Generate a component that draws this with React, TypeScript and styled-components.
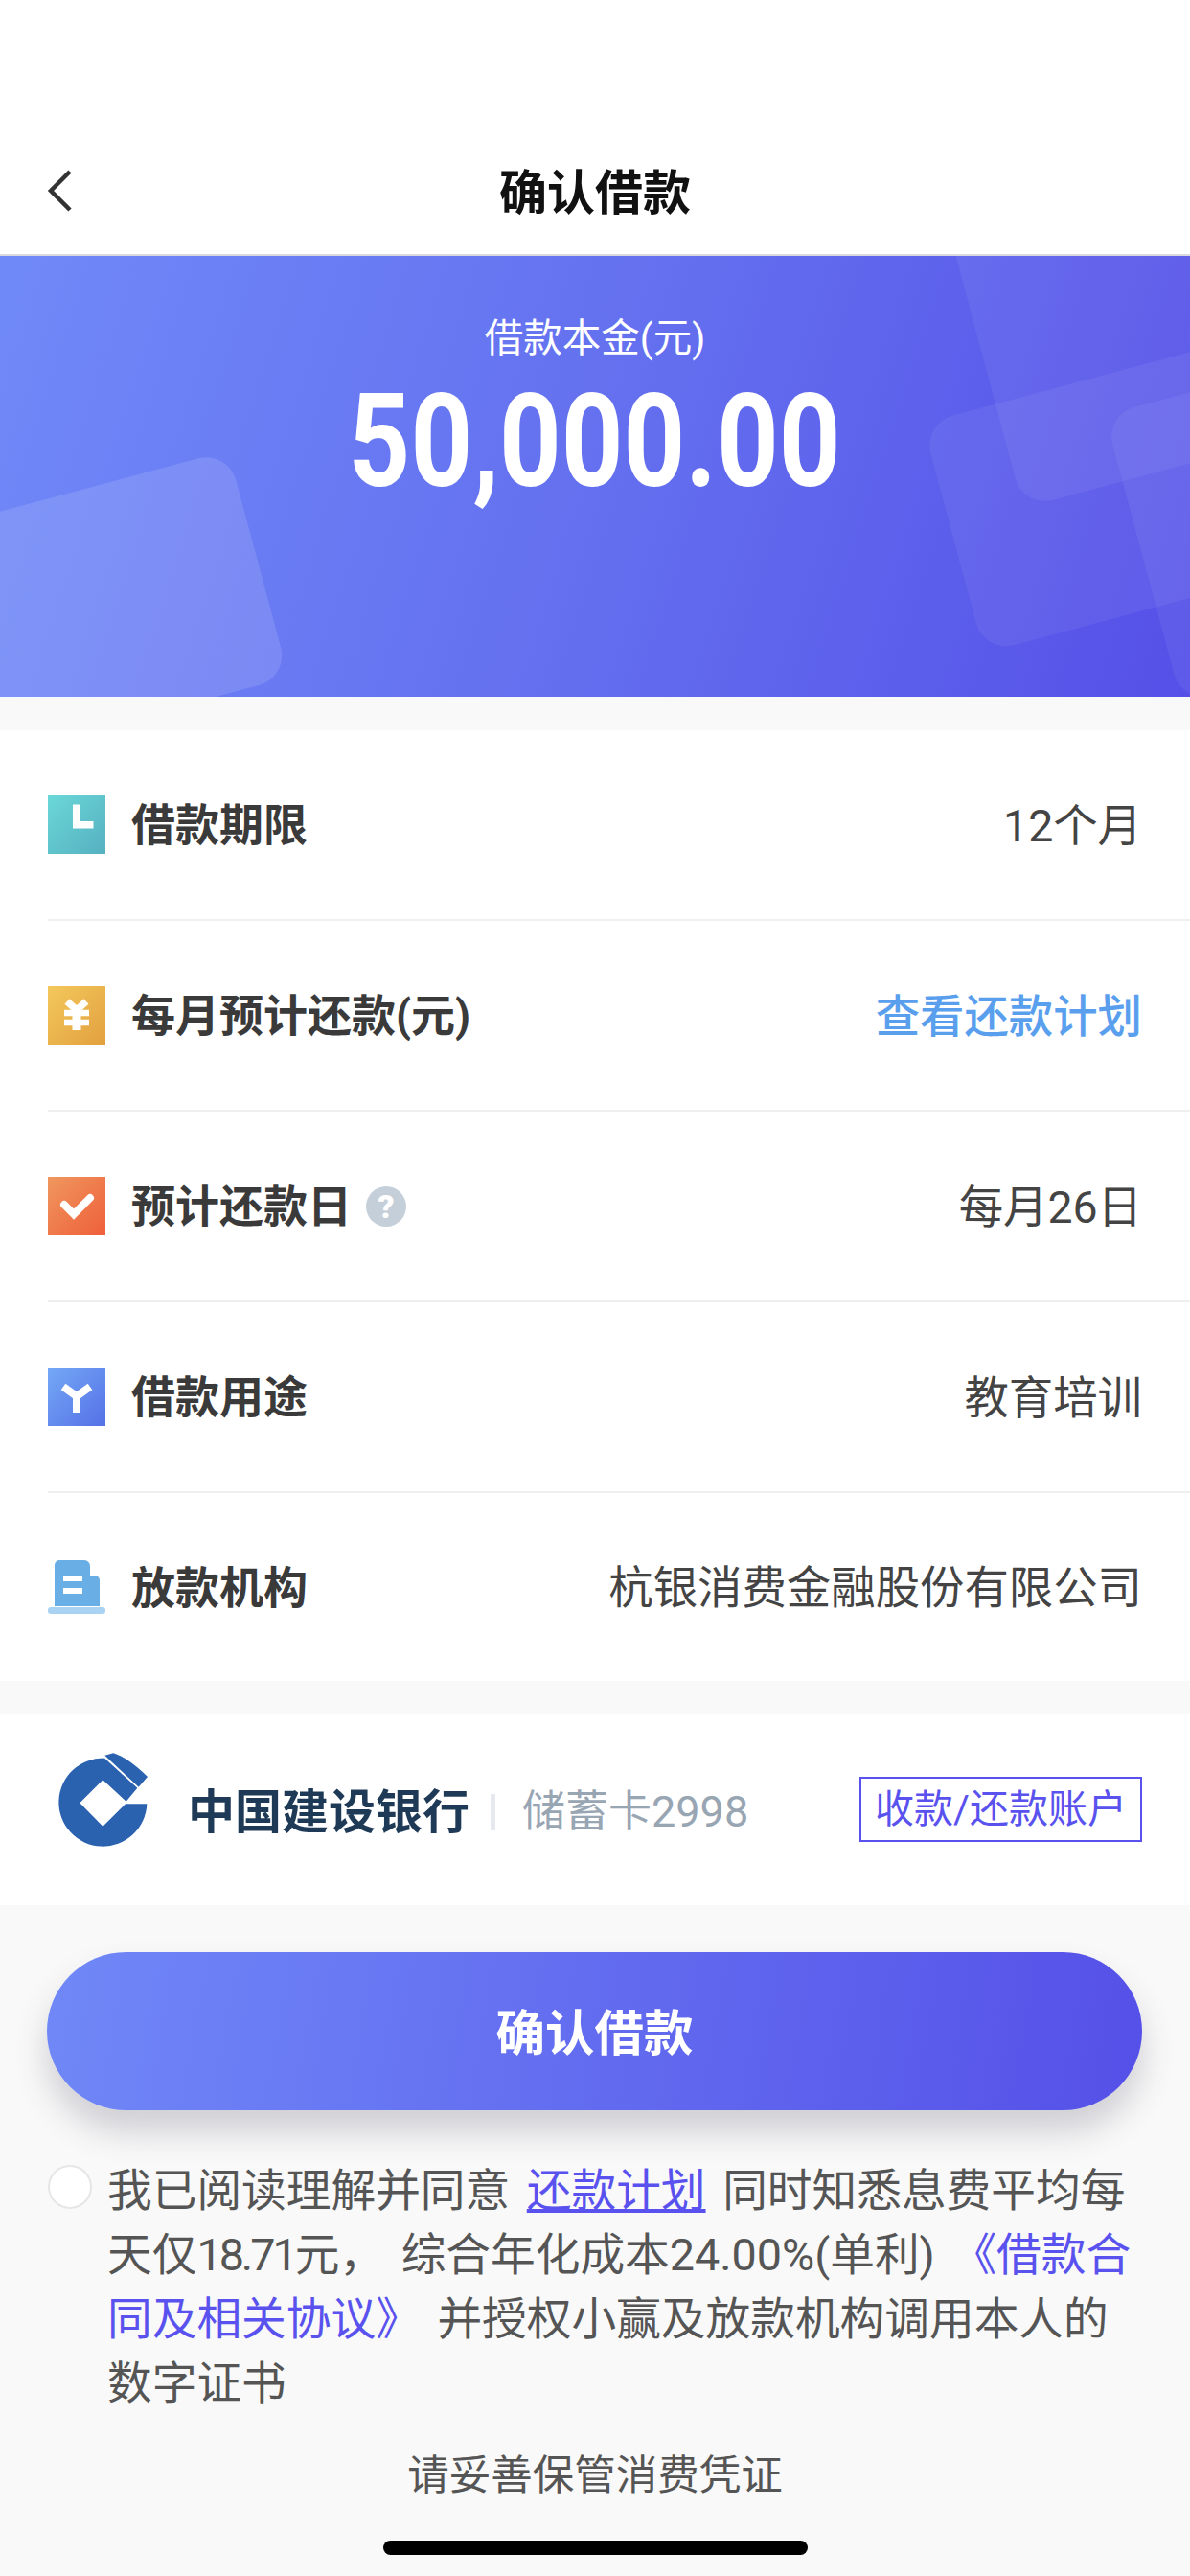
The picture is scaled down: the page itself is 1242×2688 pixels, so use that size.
import styled, { createGlobalStyle } from 'styled-components'

const GlobalStyle = createGlobalStyle`
  * { box-sizing: border-box; }
  html, body { margin: 0; padding: 0; background: #f9f9f9; }
  body { font-family: Roboto, "Noto Sans CJK SC", sans-serif; }
`

function ClockIcon() {
  return (
    <svg width="60" height="61" viewBox="0 0 60 61">
      <defs>
        <linearGradient id="clockBg" x1="0" y1="0" x2="1" y2="1">
          <stop offset="0" stopColor="#6ad8d8" />
          <stop offset="1" stopColor="#56b0c0" />
        </linearGradient>
      </defs>
      <rect width="60" height="61" fill="url(#clockBg)" />
      <path d="M26 9.500h8v17.500h13.500v7.500H26z" fill="#fff" />
    </svg>
  )
}

function YenIcon() {
  return (
    <svg width="60" height="61" viewBox="0 0 60 61">
      <defs>
        <linearGradient id="yenBg" x1="0" y1="0" x2="1" y2="1">
          <stop offset="0" stopColor="#f3c85c" />
          <stop offset="1" stopColor="#e2a03f" />
        </linearGradient>
      </defs>
      <rect width="60" height="61" fill="url(#yenBg)" />
      <path d="M20 16l10 9 10-9" stroke="#fff" strokeWidth="7.500" fill="none" />
      <path d="M17 28h26M17 38h26" stroke="#fff" strokeWidth="6.500" fill="none" />
      <path d="M30 24v22" stroke="#fff" strokeWidth="9" fill="none" />
    </svg>
  )
}

function CheckIcon() {
  return (
    <svg width="60" height="61" viewBox="0 0 60 61">
      <defs>
        <linearGradient id="checkBg" x1="0" y1="0" x2="1" y2="1">
          <stop offset="0" stopColor="#f0975e" />
          <stop offset="1" stopColor="#ee5f3a" />
        </linearGradient>
      </defs>
      <rect width="60" height="61" fill="url(#checkBg)" />
      <path d="M17 29l10 10 17-17" stroke="#fff" strokeWidth="8" fill="none" strokeLinecap="round" />
    </svg>
  )
}

function UsageIcon() {
  return (
    <svg width="60" height="61" viewBox="0 0 60 61">
      <defs>
        <linearGradient id="usageBg" x1="0" y1="0" x2="1" y2="1">
          <stop offset="0" stopColor="#74a9f6" />
          <stop offset="1" stopColor="#5570e6" />
        </linearGradient>
      </defs>
      <rect width="60" height="61" fill="url(#usageBg)" />
      <path d="M16 20l14 10 14-10M30 30v17" stroke="#fff" strokeWidth="8" fill="none" />
    </svg>
  )
}

function BuildingIcon() {
  return (
    <svg width="60" height="56" viewBox="0 0 60 56">
      <path d="M7 5a5 5 0 0 1 5-5h26a6 6 0 0 1 6 6v10h5a5 5 0 0 1 5 5v27H7z" fill="#6aaee6" />
      <rect y="49" width="60" height="7" rx="3" fill="#a9d2f3" />
      <path d="M16 16h20v6H16zM16 29h20v6H16z" fill="#fff" />
    </svg>
  )
}

function BankLogo() {
  return (
    <svg width="120" height="120" viewBox="0 0 360 360">
      <path
        d="M310 190A138 138 0 1 1 178 47L280 140L245 182L172 115L100 187L172 260L243 190Z"
        fill="#2a62b0"
      />
      <path d="M178 38L205 31Q250 45 312 105L284 137Z" fill="#2a62b0" />
    </svg>
  )
}

const rows = [
  { icon: <ClockIcon />, label: '借款期限', value: '12个月' },
  { icon: <YenIcon />, label: '每月预计还款(元)', value: '查看还款计划', link: true },
  { icon: <CheckIcon />, label: '预计还款日', value: '每月26日', help: true },
  { icon: <UsageIcon />, label: '借款用途', value: '教育培训' },
  { icon: <BuildingIcon />, label: '放款机构', value: '杭银消费金融股份有限公司' },
]

function App() {
  return (
    <Page>
      <GlobalStyle />
      <Header>
        <BackButton>
          <svg width="30" height="46" viewBox="0 0 30 46">
            <path d="M24 3L4 23l20 20" stroke="#333" strokeWidth="4.500" fill="none" />
          </svg>
        </BackButton>
        <Title>确认借款</Title>
      </Header>

      <Banner>
        <BannerArt width="1242" height="460" viewBox="0 0 1242 460">
          <g fill="#fff">
            <rect x="-300" y="0" width="300" height="245" rx="32" opacity="0.12" transform="translate(238 203) rotate(-15)" />
            <rect x="0" y="-400" width="400" height="400" rx="32" opacity="0.06" transform="translate(1068 263) rotate(-15)" />
            <rect x="0" y="0" width="400" height="248" rx="32" opacity="0.06" transform="translate(963 175) rotate(-15)" />
            <rect x="0" y="0" width="400" height="312" rx="32" opacity="0.06" transform="translate(1153 166) rotate(-15)" />
          </g>
        </BannerArt>
        <BannerLabel>借款本金(元)</BannerLabel>
        <Amount>50,000.00</Amount>
      </Banner>

      <List>
        {rows.map((row, i) => (
          <Row key={i}>
            <IconSlot>{row.icon}</IconSlot>
            <RowLabel>{row.label}</RowLabel>
            {row.help && <HelpDot>?</HelpDot>}
            <RowValue $link={row.link}>{row.value}</RowValue>
          </Row>
        ))}
      </List>

      <BankRow>
        <LogoSlot><BankLogo /></LogoSlot>
        <BankName>中国建设银行</BankName>
        <BankDivider />
        <CardNo>储蓄卡2998</CardNo>
        <AccountTag>收款/还款账户</AccountTag>
      </BankRow>

      <ConfirmButton>确认借款</ConfirmButton>

      <Agreement>
        <Radio />
        <AgreementText>
          我已阅读理解并同意 <PlanLink>还款计划</PlanLink> 同时知悉息费平均每天仅<Narrow>18.71</Narrow>元， 综合年化成本24.00%(单利) <ContractLink>《借款合同及相关协议》</ContractLink> 并授权小赢及放款机构调用本人的数字证书
        </AgreementText>
      </Agreement>

      <Footer>请妥善保管消费凭证</Footer>
      <HomeBar />
    </Page>
  )
}

const Page = styled.div`
  width: 1242px;
  height: 2688px;
  overflow: hidden;
  background: #f9f9f9;
  display: flex;
  flex-direction: column;
`

const Header = styled.header`
  height: 267px;
  background: #fff;
  border-bottom: 2px solid #d9d9de;
  padding-top: 136px;
  display: grid;
  grid-template-columns: 1fr auto 1fr;
  align-items: start;
`

const BackButton = styled.div`
  padding-left: 49px;
  height: 46px;
  margin-top: 40px;
`

const Title = styled.h1`
  margin: 0;
  font-size: 50px;
  line-height: 132px;
  font-weight: 700;
  color: #111;
`

const Banner = styled.section`
  position: relative;
  height: 460px;
  overflow: hidden;
  background: linear-gradient(108deg, #7089f8 0%, #6470ef 50%, #5550e8 100%);
  display: flex;
  flex-direction: column;
  align-items: center;
  padding-top: 60px;
`

const BannerArt = styled.svg`
  position: absolute;
  left: 0;
  top: 0;
`

const BannerLabel = styled.div`
  font-size: 40.500px;
  line-height: 52px;
  color: #fff;
  z-index: 1;
`

const Amount = styled.div`
  margin-top: -3px;
  font-family: Roboto, sans-serif;
  font-size: 136px;
  line-height: 170px;
  font-weight: 700;
  color: #fff;
  transform: scaleX(0.83);
  z-index: 1;
`

const List = styled.section`
  margin-top: 35px;
  background: #fff;
  padding-left: 50px;
`

const Row = styled.div`
  height: 199px;
  padding-right: 50px;
  border-bottom: 2px solid #efefef;
  display: flex;
  align-items: center;

  &:last-child {
    height: 196px;
    border-bottom: 0;
  }
`

const IconSlot = styled.div`
  width: 60px;
  height: 61px;
  margin-right: 27px;
  display: flex;
  align-items: center;
`

const RowLabel = styled.div`
  margin-bottom: 7px;
  font-size: 46px;
  font-weight: 700;
  color: #3a3a3a;
`

const HelpDot = styled.span`
  width: 42px;
  height: 42px;
  margin-left: 15px;
  border-radius: 50%;
  background: #c5cfda;
  color: #fff;
  font-size: 34px;
  font-weight: 900;
  line-height: 42px;
  text-align: center;
`

const RowValue = styled.div<{ $link?: boolean }>`
  margin-left: auto;
  margin-bottom: 7px;
  font-size: 46.400px;
  font-weight: ${({ $link }) => ($link ? 500 : 400)};
  color: ${({ $link }) => ($link ? '#5a9fee' : '#444')};
`

const BankRow = styled.section`
  margin-top: 34px;
  height: 200px;
  background: #fff;
  padding: 0 50px 0 62px;
  display: flex;
  align-items: center;
`

const LogoSlot = styled.div`
  width: 146px;
  height: 120px;
  margin-left: -12px;
  margin-top: -18px;
  flex-shrink: 0;
`

const BankName = styled.div`
  margin-bottom: 3px;
  font-size: 49px;
  font-weight: 700;
  color: #1f3a57;
`

const BankDivider = styled.span`
  width: 5px;
  height: 38px;
  margin: 5px 28px 0 22px;
  background: #e6eaee;
`

const CardNo = styled.div`
  margin-bottom: 3px;
  font-size: 45px;
  color: #98a5b3;
`

const AccountTag = styled.div`
  margin-left: auto;
  width: 295px;
  height: 68px;
  border: 2px solid #5a52ee;
  color: #5a52ee;
  font-size: 41px;
  line-height: 64px;
  text-align: center;
`

const ConfirmButton = styled.button`
  margin: 49px 50px 0 49px;
  height: 165px;
  flex-shrink: 0;
  border: 0;
  border-radius: 83px;
  padding: 0 0 5px;
  background: linear-gradient(100deg, #7088f7 0%, #5550e8 100%);
  box-shadow: 0 22px 34px rgba(60, 60, 80, 0.22);
  color: #fff;
  font-family: inherit;
  font-size: 51.500px;
  font-weight: 700;
`

const Agreement = styled.div`
  margin-top: 51px;
  padding: 0 50px;
  display: flex;
  gap: 16px;
`

const Radio = styled.span`
  width: 46px;
  height: 46px;
  margin-top: 6px;
  flex-shrink: 0;
  border-radius: 50%;
  background: #fff;
  border: 2px solid #e6e6e6;
`

const AgreementText = styled.p`
  margin: 0;
  font-size: 46.700px;
  line-height: 67px;
  word-spacing: 6px;
  color: #555;
`

const Narrow = styled.span`
  letter-spacing: -3px;
`

const PlanLink = styled.span`
  color: #5a52ee;
  text-decoration: underline;
`

const ContractLink = styled.span`
  color: #5a52ee;
`

const Footer = styled.div`
  margin-top: 33px;
  font-size: 43.500px;
  line-height: 60px;
  color: #555;
  text-align: center;
`

const HomeBar = styled.div`
  width: 443px;
  height: 15px;
  margin: 37px auto 0;
  border-radius: 8px;
  background: #000;
`

export default App
